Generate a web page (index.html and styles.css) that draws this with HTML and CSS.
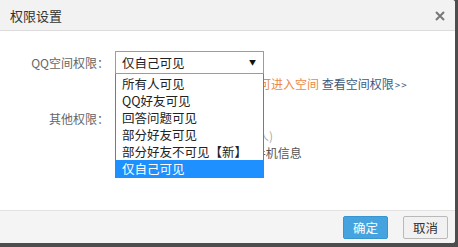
FILE: index.html
```html
<!DOCTYPE html>
<html lang="zh-CN">
<head>
  <meta charset="UTF-8" />
  <title>权限设置</title>
  <link rel="stylesheet" href="styles.css">
</head>
<body>
  <div class="dialog">
    <div class="dialog-head">
      <span class="dialog-title">权限设置</span>
      <svg class="close" width="10" height="10" viewBox="0 0 10 10">
        <path d="M1 1 L9 9 M9 1 L1 9" stroke="#777" stroke-width="2" />
      </svg>
    </div>

    <div class="dialog-body">
      <div class="row">
        <label class="row-label">QQ空间权限：</label>
        <div class="row-field">
          <div class="fake-select">
            <span>仅自己可见</span>
            <span class="arrow">▼</span>
            <ul class="options">
              <li>所有人可见</li>
              <li>QQ好友可见</li>
              <li>回答问题可见</li>
              <li>部分好友可见</li>
              <li>部分好友不可见【新】</li>
              <li class="selected">仅自己可见</li>
            </ul>
          </div>
          <div class="hint">
            <span class="hint-orange">在当前设置下只有你自己才可进入空间</span>
            <a href="#" class="hint-link">查看空间权限<small>&gt;&gt;</small></a>
          </div>
        </div>
      </div>

      <div class="row row-other">
        <label class="row-label">其他权限：</label>
        <div class="row-field">
          <div class="check"><input type="checkbox"> 允许陌生人访问</div>
          <div class="note">(最多对五十位好友可见人)</div>
          <div class="check"><input type="checkbox"> 在好友动态中显示我的手机信息</div>
        </div>
      </div>
    </div>

    <div class="dialog-foot">
      <button class="btn btn-ok">确定</button>
      <button class="btn btn-cancel">取消</button>
    </div>
  </div>
</body>
</html>
```

FILE: styles.css
```css
html, body {
  margin: 0;
  padding: 0;
}

body {
  width: 458px;
  height: 247px;
  background: #4d4d4d;
  font-family: "Noto Sans CJK SC", "Noto Sans", sans-serif;
  font-size: 12px;
  color: #333;
  overflow: hidden;
}

.dialog {
  width: 455px;
  height: 243px;
  background: #fff;
  border-radius: 0 3px 3px 0;
  display: flex;
  flex-direction: column;
  overflow: hidden;
}

.dialog-head {
  height: 31px;
  background: #f2f2f2;
  border-bottom: 1px solid #dcdcdc;
  display: flex;
  align-items: center;
  justify-content: space-between;
  padding: 0 10px 0 10px;
  box-sizing: border-box;
}

.dialog-title {
  font-size: 13px;
  color: #333;
}

.close {
  display: block;
  margin-top: 1px;
}

.dialog-body {
  flex: 1;
  padding-top: 20px;
}

.row {
  display: grid;
  grid-template-columns: 109px 1fr;
  column-gap: 6px;
}

.row-label {
  text-align: right;
  color: #666;
  line-height: 23px;
}

.row-other {
  margin-top: 16px;
}

.row-other .row-label {
  line-height: 17px;
}

.fake-select {
  position: relative;
  width: 149px;
  height: 23px;
  box-sizing: border-box;
  border: 1px solid #8a9fbd;
  padding-left: 6px;
  line-height: 21px;
  color: #222;
  font-size: 12.5px;
}

.arrow {
  position: absolute;
  right: 7px;
  top: 0;
  font-size: 7px;
  color: #111;
}

.options {
  position: absolute;
  z-index: 5;
  top: 22px;
  left: -1px;
  width: 149px;
  box-sizing: border-box;
  margin: 0;
  padding: 1px 0 0;
  list-style: none;
  background: #fff;
  border: 1px solid #7a7a7a;
  border-top: none;
}

.options li {
  height: 17px;
  line-height: 17px;
  padding-left: 6px;
  color: #222;
}

.options li.selected {
  background: #1e90ff;
  color: #fff;
}

.hint {
  line-height: 18px;
  margin-top: 1px;
  white-space: nowrap;
}

.hint-orange {
  color: #ec8a45;
}

.hint-link {
  color: #3b5a80;
  text-decoration: none;
  margin-left: 0;
}

.hint-link small {
  font-size: 10px;
  letter-spacing: 1px;
  margin-left: 1px;
}

.check {
  line-height: 17px;
  color: #555;
  white-space: nowrap;
}

.check input {
  width: 12px;
  height: 12px;
  margin: 0 2px 0 2px;
  vertical-align: -2px;
}

.note {
  line-height: 17px;
  color: #aaa;
  padding-left: 18px;
  white-space: nowrap;
}

.dialog-foot {
  height: 33px;
  background: #f4f4f4;
  border-top: 1px solid #e2e2e2;
  box-sizing: border-box;
  display: flex;
  justify-content: flex-end;
  align-items: center;
  gap: 15px;
  padding-right: 7px;
}

.btn {
  height: 23px;
  width: 45px;
  padding: 0;
  font-family: inherit;
  font-size: 12.5px;
  border-radius: 2px;
}

.btn-ok {
  background: #45a4df;
  border: 1px solid #3a95cf;
  color: #fff;
}

.btn-cancel {
  background: #f1f1f1;
  border: 1px solid #b9b9b9;
  color: #333;
}
```
